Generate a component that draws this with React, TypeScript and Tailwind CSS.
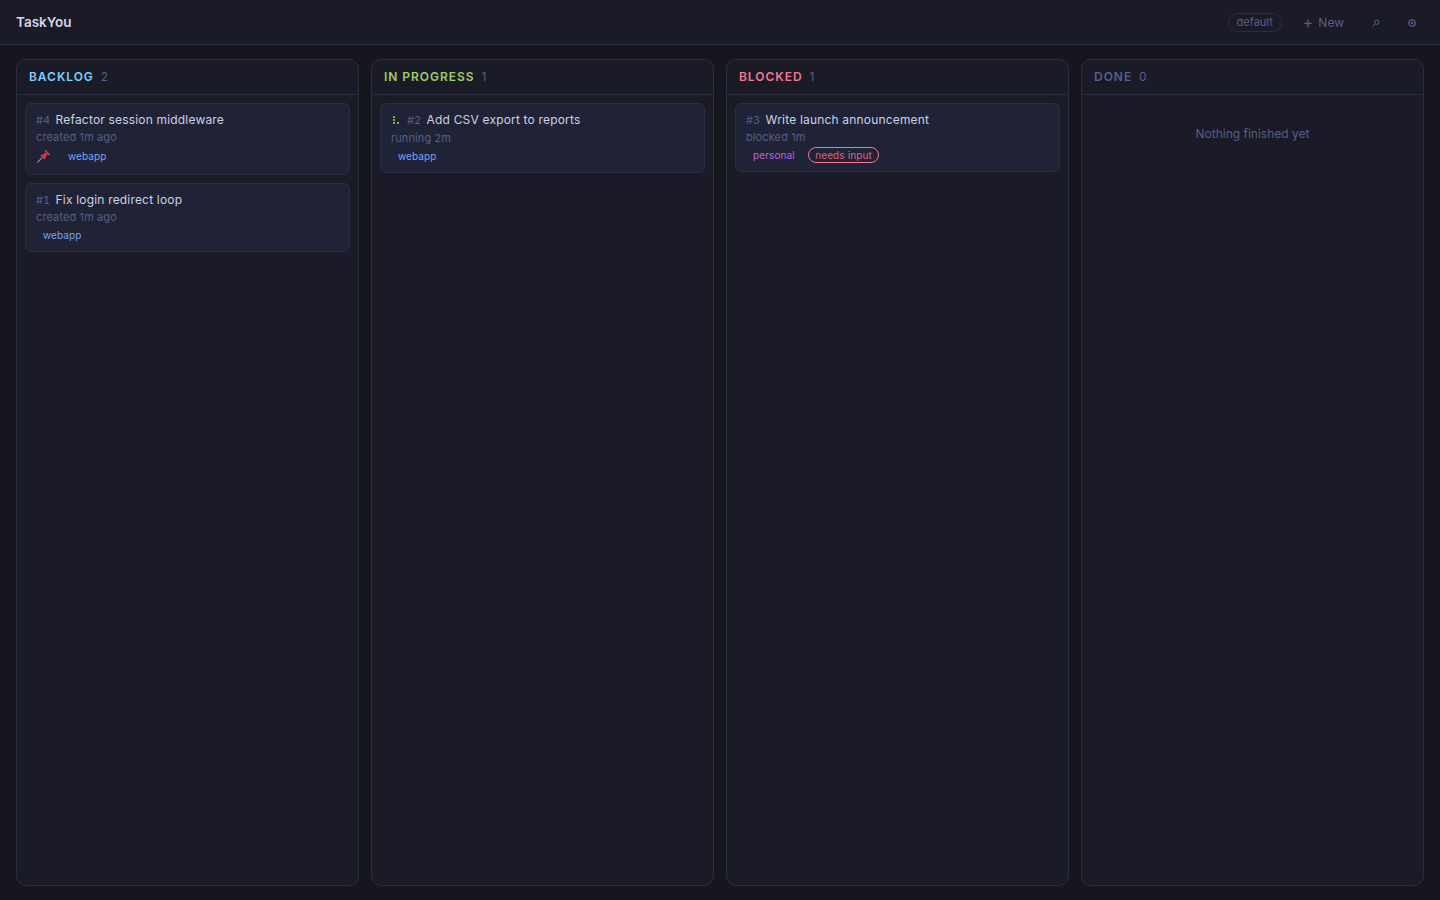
const tagClass = "px-[7px] text-[10px] leading-[14px] tracking-[0.01em]";

function PinIcon() {
  return (
    <svg width="14" height="14" viewBox="0 0 14 14" className="ml-px shrink-0">
      <path d="M0.8 13.2 L5.4 8.4" stroke="#8f96a8" strokeWidth="1.1" strokeLinecap="round" />
      <path d="M3 6.2 L7.8 11 L8.6 8.2 L10.6 5.6 L8.4 3.4 L5.8 5.4 Z" fill="#dc2f3e" />
      <path d="M7.6 2 L8.6 1 L13 5.4 L12 6.4 Z" fill="#f0434f" />
      <path d="M8.2 3.2 L9 2.4 L11.6 5 L10.8 5.8 Z" fill="#c9202f" />
    </svg>
  );
}

function SearchIcon() {
  return (
    <svg width="8" height="8" viewBox="0 0 8 8" fill="none" stroke="#565f89" strokeWidth="1">
      <circle cx="4.8" cy="3.2" r="2.2" />
      <path d="M3.2 4.8 L1 7" strokeLinecap="round" />
    </svg>
  );
}

function GearIcon() {
  return (
    <svg width="8" height="8" viewBox="0 0 8 8" fill="none" stroke="#565f89">
      <circle cx="4" cy="4" r="1.2" fill="#565f89" strokeWidth="0" />
      <circle cx="4" cy="4" r="3.2" strokeWidth="1.3" />
    </svg>
  );
}

function Spinner() {
  return (
    <svg width="6" height="8" viewBox="0 0 6 8" fill="#87ad5a" className="shrink-0">
      <rect x="0" y="0" width="2" height="2" />
      <rect x="0" y="3" width="2" height="2" />
      <rect x="0" y="6" width="2" height="2" />
      <rect x="4" y="6" width="2" height="2" />
    </svg>
  );
}

interface TaskCardProps {
  id: number;
  title: string;
  meta: string;
  indicator?: boolean;
  children: React.ReactNode;
}

function TaskCard({ id, title, meta, indicator, children }: TaskCardProps) {
  return (
    <div className="rounded-md border border-[#292e42] bg-[#1f2335] px-[10px] pt-[7px] pb-[7px]">
      <div
        className={`flex items-start text-xs leading-[18px] tracking-[0.015em] text-[#cdd1e6] ${
          indicator ? "h-[19px]" : "h-[18px]"
        }`}
      >
        {indicator && (
          <span className="mr-[8px] ml-[2px] flex h-[18px] items-center">
            <Spinner />
          </span>
        )}
        <span className="mr-[5.5px] text-[11px] tracking-normal tabular-nums text-[#565f89]">#{id}</span>
        <span>{title}</span>
      </div>
      <div className="text-[11px] leading-[16px] tracking-[0.01em] text-[#565f89]">{meta}</div>
      <div className="mt-px flex items-center">{children}</div>
    </div>
  );
}

function Column({ title, count, color, children }: { title: string; count: number; color: string; children?: React.ReactNode }) {
  return (
    <section className="flex min-w-0 flex-col rounded-[10px] border border-[#292e42] bg-[#1a1b26]">
      <header className="flex h-[35px] shrink-0 items-center border-b border-[#292e42] px-3">
        <span className={`text-xs font-semibold tracking-[0.08em] ${color}`}>{title}</span>
        <span className="ml-[7px] text-xs text-[#565f89]">{count}</span>
      </header>
      <div className="flex flex-col gap-2 p-2">{children}</div>
    </section>
  );
}

export default function App() {
  return (
    <div
      className="flex h-screen flex-col bg-[#16161e] text-[#c0caf5]"
      style={{ fontFamily: "Inter, 'Noto Sans', sans-serif" }}
    >
      <header className="flex h-[45px] shrink-0 items-center justify-between border-b border-[#292e42] bg-[#1a1b26] pt-px pl-4 pr-6">
        <h1 className="text-[13.5px] font-semibold text-[#d5d8ea]">TaskYou</h1>
        <div className="flex items-center text-[#565f89]">
          <span className="flex h-[19px] items-center rounded-full border border-[#292e42] px-2 text-[11px]">default</span>
          <span className="ml-[21px] flex items-center text-xs">
            <span className="mr-[5px] -mt-px text-base leading-none">+</span>
            New
          </span>
          <span className="ml-7 flex"><SearchIcon /></span>
          <span className="ml-7 flex"><GearIcon /></span>
        </div>
      </header>

      <main className="grid min-h-0 flex-1 grid-cols-4 gap-3 px-4 pt-[14px] pb-[14px]">
        <Column title="BACKLOG" count={2} color="text-[#7dcfff]">
          <TaskCard id={4} title="Refactor session middleware" meta="created 1m ago">
            <span className="mb-px flex h-[20px] items-center">
              <PinIcon />
              <span className={`ml-[10px] ${tagClass} text-[#7aa2f7]`}>webapp</span>
            </span>
          </TaskCard>
          <TaskCard id={1} title="Fix login redirect loop" meta="created 1m ago">
            <span className={`h-[18px] py-[2px] ${tagClass} text-[#7aa2f7]`}>webapp</span>
          </TaskCard>
        </Column>

        <Column title="IN PROGRESS" count={1} color="text-[#9ece6a]">
          <TaskCard id={2} title="Add CSV export to reports" meta="running 2m" indicator>
            <span className={`h-[18px] py-[2px] ${tagClass} text-[#7aa2f7]`}>webapp</span>
          </TaskCard>
        </Column>

        <Column title="BLOCKED" count={1} color="text-[#f7768e]">
          <TaskCard id={3} title="Write launch announcement" meta="blocked 1m">
            <span className={`h-[18px] py-[2px] ${tagClass} text-[#bb66dd]`}>personal</span>
            <span className="ml-[6px] rounded-full border border-[#f7768e] px-[6.5px] text-[10px] leading-[14px] tracking-[0.01em] text-[#e0607c]">needs input</span>
          </TaskCard>
        </Column>

        <Column title="DONE" count={0} color="text-[#565f89]">
          <p className="pt-[23px] text-center text-xs leading-[16px] text-[#565f89]">Nothing finished yet</p>
        </Column>
      </main>
    </div>
  );
}
